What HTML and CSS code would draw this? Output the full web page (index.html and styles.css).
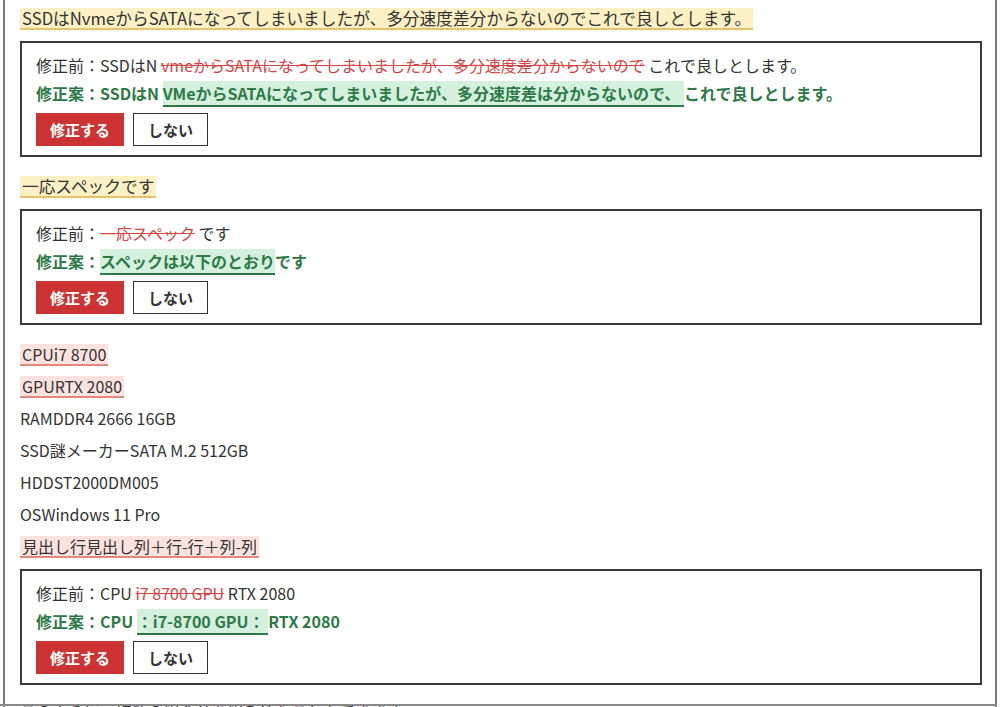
FILE: index.html
```html
<!DOCTYPE html>
<html lang="ja">
<head>
    <meta charset="UTF-8">
    <meta name="viewport" content="width=device-width, initial-scale=1.0">
    <title>校正チェック</title>
    <link rel="stylesheet" href="styles.css">
</head>
<body>
    <div class="doc">
        <p class="line"><span class="mark warn">SSDはNvmeからSATAになってしまいましたが、多分速度差分からないのでこれで良しとします。</span></p>

        <div class="suggest">
            <p class="before">修正前：SSDはN <del>vmeからSATAになってしまいましたが、多分速度差分からないので</del> これで良しとします。</p>
            <p class="after">修正案：SSDはN <ins>VMeからSATAになってしまいましたが、多分速度差は分からないので、 </ins>これで良しとします。</p>
            <div class="actions">
                <button class="btn-fix">修正する</button>
                <button class="btn-skip">しない</button>
            </div>
        </div>

        <p class="line"><span class="mark warn">一応スペックです</span></p>

        <div class="suggest">
            <p class="before">修正前：<del>一応スペック</del> です</p>
            <p class="after">修正案：<ins>スペックは以下のとおり</ins>です</p>
            <div class="actions">
                <button class="btn-fix">修正する</button>
                <button class="btn-skip">しない</button>
            </div>
        </div>

        <p class="line"><span class="mark error">CPUi7 8700</span></p>
        <p class="line"><span class="mark error">GPURTX 2080</span></p>
        <p class="line">RAMDDR4 2666 16GB</p>
        <p class="line">SSD謎メーカーSATA M.2 512GB</p>
        <p class="line">HDDST2000DM005</p>
        <p class="line">OSWindows 11 Pro</p>
        <p class="line"><span class="mark error">見出し行見出し列＋行-行＋列-列</span></p>

        <div class="suggest">
            <p class="before">修正前：CPU <del>i7 8700 GPU</del> RTX 2080</p>
            <p class="after">修正案：CPU <ins>：i7-8700 GPU： </ins>RTX 2080</p>
            <div class="actions">
                <button class="btn-fix">修正する</button>
                <button class="btn-skip">しない</button>
            </div>
        </div>

        <p class="line last">このように、複数の組合せを組み込むこともできます。</p>
    </div>
    <div class="frame-bottom"></div>
</body>
</html>
```

FILE: styles.css
```css
body {
    margin: 0;
    font-family: "Noto Sans CJK JP", sans-serif;
    color: #333;
    background: #fff;
}
.doc {
    margin: 0 3px;
    padding: 2px 13px 0 15px;
    border-left: 2px solid #777;
    border-right: 2px solid #777;
}
.line {
    margin: 0;
    font-size: 16px;
    line-height: 32px;
}
.line.last {
    margin-top: -3px;
}
.mark {
    display: inline-block;
    line-height: 20px;
    padding: 0 2px;
}
.mark.warn {
    font-size: 16.7px;
    background-color: #fcf0c4;
    border-bottom: 2px solid #e6c36c;
}
.mark.error {
    background-color: #fde3df;
    border-bottom: 2px solid #e3887a;
}
.suggest {
    margin: 7px 0 13px;
    padding: 8px 14px 9px;
    border: 2px solid #3a3a3a;
    font-size: 16px;
}
.suggest p {
    margin: 0;
    line-height: 28px;
}
.after {
    color: #2d7a47;
    font-weight: bold;
}
del {
    color: #d24848;
}
ins {
    text-decoration: none;
    background-color: #d5f1de;
    border-bottom: 2px solid #2d7a47;
}
.actions {
    display: flex;
    gap: 9px;
    margin-top: 6px;
}
.actions button {
    height: 33px;
    padding: 0 14px;
    font-family: inherit;
    font-size: 15px;
    font-weight: bold;
    cursor: pointer;
}
.btn-fix {
    background-color: #cc3333;
    color: white;
    border: none;
}
.btn-skip {
    background-color: white;
    color: #333;
    border: 1px solid #333;
}
/* window edge drawn over the last line */
.frame-bottom {
    position: fixed;
    left: 0;
    right: 3px;
    bottom: 1px;
    height: 2px;
    background: #888;
}
```
